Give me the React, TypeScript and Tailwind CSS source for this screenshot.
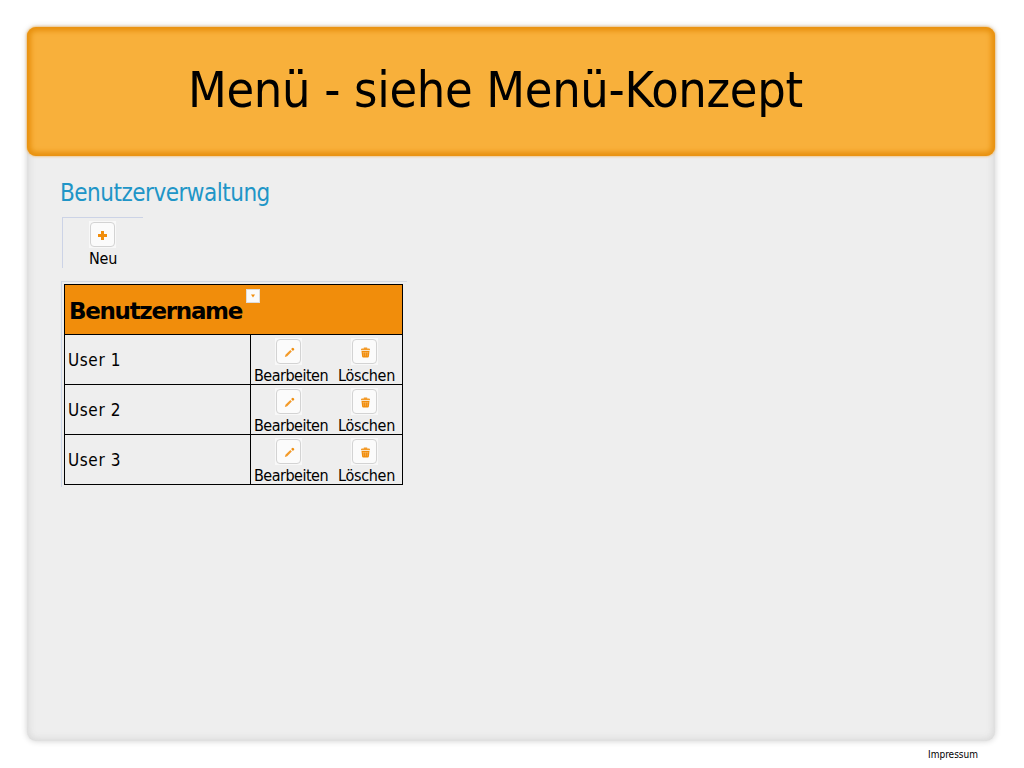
import React from "react";

const users = ["User 1", "User 2", "User 3"];

function IconBox({ children }: { children: React.ReactNode }) {
  return (
    <span className="flex size-[27px] shrink-0 items-center justify-center bg-[#f8f8f8]">
      <span className="flex size-[25px] items-center justify-center rounded-[4px] border border-[#d3d3d3] bg-[#fbfbfb] pl-px pt-px">
        {children}
      </span>
    </span>
  );
}

function Plus() {
  return (
    <svg width="9" height="9" viewBox="0 0 9 9">
      <path d="M3 0h3v3h3v3H6v3H3V6H0V3h3z" fill="#f18d0b" />
    </svg>
  );
}

function Pencil() {
  return (
    <svg width="11" height="11" viewBox="0 0 11 11">
      <path d="M.9 10.1l.6-2.4 4.8-4.6 1.5 1.5-4.6 4.7z" fill="#f39a28" />
      <path d="M7.1 2.1l1.2-1.2q.6-.4 1.1.1l.7.7q.4.5 0 1L8.9 4z" fill="#f18d0b" />
    </svg>
  );
}

function Trash() {
  return (
    <svg width="11" height="11" viewBox="0 0 11 11">
      <path d="M1 2.4q0-.9 1-.9h1.8V.6h3.4v.9H9q1 0 1 .9v.8H1z" fill="#f39a28" />
      <path d="M1.5 4h8l-.6 5.5q-.2 1-1.1 1H3.2q-.9 0-1.1-1z" fill="#f18d0b" />
      <path d="M2.5 5.5h6M3.6 5v4.2M5.5 5v4.2M7.4 5v4.2" stroke="#f8bd70" strokeWidth=".5" />
    </svg>
  );
}

export default function App() {
  return (
    <div className="h-[768px] w-[1024px] overflow-hidden bg-white pt-[27px] font-['DejaVu_Sans_Condensed','DejaVu_Sans',sans-serif] text-black [font-stretch:condensed]">
      <main className="ml-[27px] h-[714px] w-[968px] rounded-[9px] bg-[#eeeeee] shadow-[0_0_6px_#cfcfcf,inset_0_0_7px_2px_#d8d8d8]">
        <header className="flex h-[129px] rounded-[9px] bg-[#f8b03b] pl-[161px] pt-[33px] shadow-[0_0_3px_#eea335,inset_0_0_5px_4px_#e8910f]">
          <h1 className="h-[60px] whitespace-nowrap text-[50px] leading-[60px] tracking-[-0.32px]">Menü - siehe Menü-Konzept</h1>
        </header>
        <div className="pl-[33px] pt-[22px]">
          <h2 className="h-[30px] whitespace-nowrap text-[24px] leading-[30px] tracking-[-0.5px] text-[#2095c7]">Benutzerverwaltung</h2>
          <div className="ml-[2px] mt-[9px] flex h-[51px] w-[81px] flex-col items-center border-l border-t border-[#ccd3e6] pt-[3px]">
            <span className="mr-[2px]"><IconBox><Plus /></IconBox></span>
            <span className="mt-px text-[16px] leading-[20px] tracking-[-0.2px]">Neu</span>
          </div>
          <div className="ml-[1px] mt-[13px] h-[206px] w-[346px] border-l border-t border-[#ccd6e8] border-t-[#d5dae2] pl-[2px] pt-[2px]">
            <table className="w-[339px] table-fixed border-collapse border border-black">
              <colgroup>
                <col className="w-[186px]" />
                <col className="w-[152px]" />
              </colgroup>
              <thead>
                <tr className="h-[50px]">
                  <th colSpan={2} className="border border-black bg-[#f18d0b] p-0 text-left">
                    <div className="flex h-[49px] items-start pl-[4px] pt-[4px]">
                      <span className="w-[177px] whitespace-nowrap pt-[7px] font-['DejaVu_Sans',sans-serif] text-[23px] leading-[30px] tracking-[-1.3px] [font-stretch:normal]">Benutzername</span>
                      <span className="flex size-[14px] items-center justify-center border border-[#dddddd] bg-[#fafafa]">
                        <svg width="4" height="4" viewBox="0 0 4 4"><path d="M0 .5h4L2 3.5z" fill="#f18d0b" /></svg>
                      </span>
                    </div>
                  </th>
                </tr>
              </thead>
              <tbody>
                {users.map((user) => (
                  <tr key={user} className="h-[50px]">
                    <td className="border border-black p-0 pl-[3px] text-[17px] leading-[22px] tracking-[0.6px]">{user}</td>
                    <td className="border border-black p-0">
                      <div className="flex h-[49px] pl-[3px] pt-[3px] text-[16px] leading-[22px] tracking-[-0.5px]">
                        <span className="flex w-[74px] flex-col items-center">
                          <span className="mr-[5px]"><IconBox><Pencil /></IconBox></span>
                          <span className="whitespace-nowrap">Bearbeiten</span>
                        </span>
                        <span className="ml-[10px] flex w-[57px] flex-col items-center">
                          <span className="mr-[4px]"><IconBox><Trash /></IconBox></span>
                          <span className="whitespace-nowrap tracking-[-0.3px]">Löschen</span>
                        </span>
                      </div>
                    </td>
                  </tr>
                ))}
              </tbody>
            </table>
          </div>
        </div>
      </main>
      <footer className="flex justify-end pr-[46px] pt-[7px] text-[10px] leading-[14px]">Impressum</footer>
    </div>
  );
}
